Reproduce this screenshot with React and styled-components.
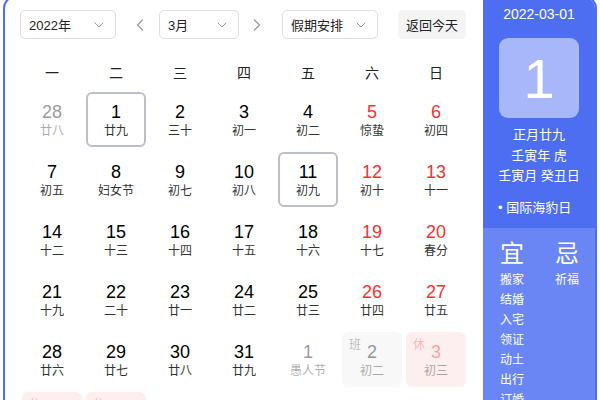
import React from 'react';
import styled, { createGlobalStyle } from 'styled-components';
import { ChevronDown, ChevronLeft, ChevronRight } from 'lucide-react';

const GlobalStyle = createGlobalStyle`
  html, body {
    margin: 0;
    padding: 0;
    background: #fff;
    overflow: hidden;
  }
  body {
    font-family: 'Liberation Sans', 'Noto Sans CJK SC', sans-serif;
  }
`;

const Page = styled.div`
  width: 600px;
  height: 400px;
  padding: 0 3px;
  box-sizing: border-box;
  overflow: hidden;
`;

const Card = styled.div`
  margin-top: -4px;
  display: flex;
  border: 2px solid #4e6ef2;
  border-radius: 12px;
  overflow: hidden;
  height: 420px;
  background: #fff;
`;

const Main = styled.div`
  width: 478px;
  padding: 12px 15px 0 15px;
  box-sizing: border-box;
`;

const Toolbar = styled.div`
  display: flex;
  align-items: center;
  height: 29px;
`;

const Select = styled.div`
  width: ${p => p.$w}px;
  height: 29px;
  box-sizing: border-box;
  border: 1px solid #dcdfe6;
  border-radius: 5px;
  display: flex;
  align-items: center;
  justify-content: space-between;
  padding: 0 8px 0 8px;
  font-size: 13px;
  color: #222;
  svg {
    color: #999;
  }
`;

const Arrow = styled.div`
  width: 24px;
  height: 29px;
  display: flex;
  align-items: center;
  justify-content: center;
  margin: ${p => p.$m};
  color: #9a9a9a;
`;

const TodayButton = styled.div`
  margin-left: 20px;
  width: 68px;
  height: 29px;
  border-radius: 5px;
  background: #f4f4f5;
  display: flex;
  align-items: center;
  justify-content: center;
  font-size: 13px;
  color: #222;
`;

const Grid = styled.div`
  display: grid;
  grid-template-columns: repeat(7, 64px);
  grid-auto-rows: 60px;
`;

const WeekHead = styled.div`
  margin-top: 13px;
  display: grid;
  grid-template-columns: repeat(7, 64px);
  height: 40px;
  align-items: center;
  text-align: center;
  font-size: 14px;
  color: #222;
`;

const Cell = styled.div`
  position: relative;
  margin: 0 2px;
  height: 55px;
  box-sizing: border-box;
  border-radius: 6px;
  border: 2px solid ${p => (p.$boxed ? '#bdbfc8' : 'transparent')};
  background: ${p => p.$bg || 'transparent'};
  text-align: center;
  padding-top: 8px;
`;

const CellBody = styled.div`
  opacity: ${p => (p.$muted ? 0.4 : 1)};
`;

const DayNum = styled.div`
  font-size: 18px;
  line-height: 20px;
  color: ${p => (p.$red ? '#f73131' : '#000')};
`;

const Lunar = styled.div`
  margin-top: 1px;
  font-size: 12px;
  line-height: 16px;
  color: #333;
`;

const Tag = styled.span`
  position: absolute;
  left: 5px;
  top: 3px;
  font-size: 12px;
  line-height: 16px;
  color: ${p => (p.$rest ? '#f73131' : '#333')};
  opacity: 0.3;
`;

const Side = styled.div`
  flex: 1;
  background: #4e6ef2;
  color: #fff;
  display: flex;
  flex-direction: column;
`;

const SideTop = styled.div`
  height: 230px;
  display: flex;
  flex-direction: column;
  align-items: center;
  padding-top: 6px;
  box-sizing: border-box;
`;

const DateText = styled.div`
  font-size: 14px;
  line-height: 20px;
`;

const BigDay = styled.div`
  margin: 14px 0 7px;
  width: 80px;
  height: 80px;
  border-radius: 9px;
  background: rgba(255, 255, 255, 0.5);
  display: flex;
  align-items: center;
  justify-content: center;
  font-size: 56px;
  font-weight: 300;
`;

const InfoLine = styled.div`
  font-size: 13px;
  line-height: 20.5px;
  text-align: center;
`;

const Festival = styled.div`
  align-self: flex-start;
  margin: 12px 0 0 15px;
  font-size: 13px;
  line-height: 18px;
`;

const SideBottom = styled.div`
  flex: 1;
  background: #6a86f5;
  display: flex;
  justify-content: space-between;
  padding: 12px 15px 0 16px;
`;

const LuckCol = styled.div`
  display: flex;
  flex-direction: column;
  align-items: center;
  width: 26px;
`;

const LuckHead = styled.div`
  font-size: 24px;
  line-height: 28px;
  margin-bottom: 2px;
`;

const LuckItem = styled.div`
  font-size: 12px;
  line-height: 20px;
`;

const rows = [
  [
    ['28', '廿八', { muted: true }],
    ['1', '廿九', { boxed: true }],
    ['2', '三十'],
    ['3', '初一'],
    ['4', '初二'],
    ['5', '惊蛰', { red: true }],
    ['6', '初四', { red: true }],
  ],
  [
    ['7', '初五'],
    ['8', '妇女节'],
    ['9', '初七'],
    ['10', '初八'],
    ['11', '初九', { boxed: true }],
    ['12', '初十', { red: true }],
    ['13', '十一', { red: true }],
  ],
  [
    ['14', '十二'],
    ['15', '十三'],
    ['16', '十四'],
    ['17', '十五'],
    ['18', '十六'],
    ['19', '十七', { red: true }],
    ['20', '春分', { red: true }],
  ],
  [
    ['21', '十九'],
    ['22', '二十'],
    ['23', '廿一'],
    ['24', '廿二'],
    ['25', '廿三'],
    ['26', '廿四', { red: true }],
    ['27', '廿五', { red: true }],
  ],
  [
    ['28', '廿六'],
    ['29', '廿七'],
    ['30', '廿八'],
    ['31', '廿九'],
    ['1', '愚人节', { muted: true }],
    ['2', '初二', { muted: true, tag: '班' }],
    ['3', '初三', { muted: true, red: true, tag: '休' }],
  ],
  [
    ['4', '初四', { muted: true, tag: '休' }],
    ['5', '清明', { muted: true, tag: '休' }],
    ['6', '初六', { muted: true }],
    ['7', '初七', { muted: true }],
    ['8', '初八', { muted: true }],
    ['9', '初九', { muted: true, red: true }],
    ['10', '初十', { muted: true, red: true }],
  ],
];

const weekDays = ['一', '二', '三', '四', '五', '六', '日'];
const good = ['搬家', '结婚', '入宅', '领证', '动土', '出行', '订婚'];
const bad = ['祈福'];

const tagBg = { 班: '#f8f8f9', 休: '#fdeff0' };

const App = () => {
  return (
    <Page>
      <GlobalStyle />
      <Card>
        <Main>
          <Toolbar>
            <Select $w={96}>
              <span>2022年</span>
              <ChevronDown size={16} strokeWidth={1.5} />
            </Select>
            <Arrow $m="0 7px 0 12px">
              <ChevronLeft size={20} strokeWidth={1.5} />
            </Arrow>
            <Select $w={80}>
              <span>3月</span>
              <ChevronDown size={16} strokeWidth={1.5} />
            </Select>
            <Arrow $m="0 13px 0 6px">
              <ChevronRight size={20} strokeWidth={1.5} />
            </Arrow>
            <Select $w={96}>
              <span>假期安排</span>
              <ChevronDown size={16} strokeWidth={1.5} />
            </Select>
            <TodayButton>返回今天</TodayButton>
          </Toolbar>
          <WeekHead>
            {weekDays.map(d => (
              <div key={d}>{d}</div>
            ))}
          </WeekHead>
          <Grid>
            {rows.flat().map(([num, lunar, opt = {}], i) => (
              <Cell key={i} $boxed={opt.boxed} $bg={opt.tag ? tagBg[opt.tag] : null}>
                {opt.tag && <Tag $rest={opt.tag === '休'}>{opt.tag}</Tag>}
                <CellBody $muted={opt.muted}>
                  <DayNum $red={opt.red}>{num}</DayNum>
                  <Lunar>{lunar}</Lunar>
                </CellBody>
              </Cell>
            ))}
          </Grid>
        </Main>
        <Side>
          <SideTop>
            <DateText>2022-03-01</DateText>
            <BigDay>1</BigDay>
            <InfoLine>正月廿九</InfoLine>
            <InfoLine>壬寅年 虎</InfoLine>
            <InfoLine>壬寅月 癸丑日</InfoLine>
            <Festival>• 国际海豹日</Festival>
          </SideTop>
          <SideBottom>
            <LuckCol>
              <LuckHead>宜</LuckHead>
              {good.map(g => (
                <LuckItem key={g}>{g}</LuckItem>
              ))}
            </LuckCol>
            <LuckCol>
              <LuckHead>忌</LuckHead>
              {bad.map(b => (
                <LuckItem key={b}>{b}</LuckItem>
              ))}
            </LuckCol>
          </SideBottom>
        </Side>
      </Card>
    </Page>
  );
};

export default App;
